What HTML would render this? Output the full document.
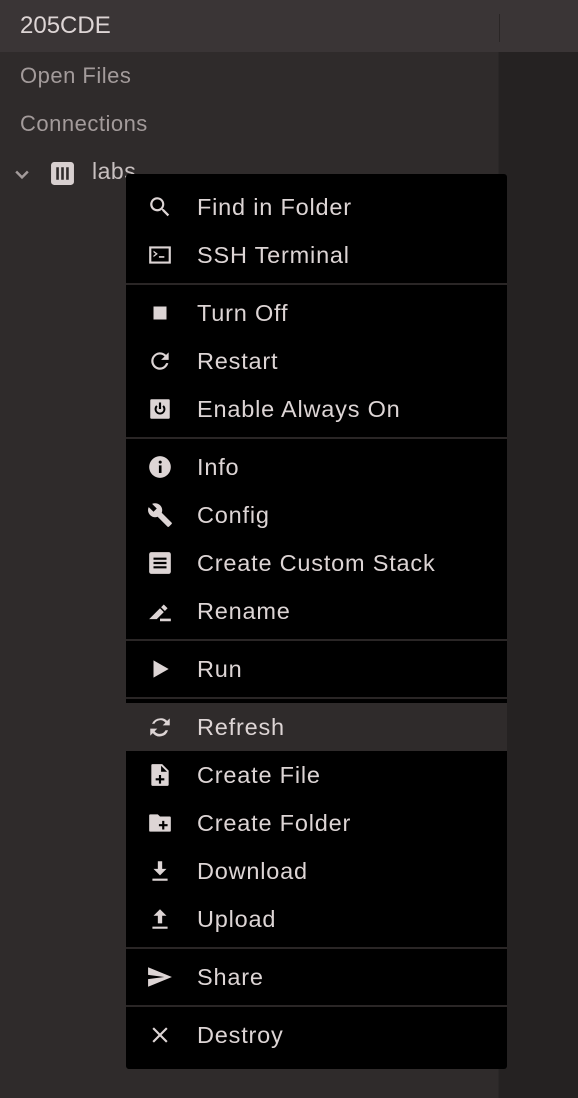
<!DOCTYPE html>
<html><head><meta charset="utf-8"><style>
*{margin:0;padding:0;box-sizing:border-box}
body{width:578px;height:1098px;overflow:hidden;background:#252222;font-family:"Liberation Sans",sans-serif;position:relative}
.top{position:absolute;left:0;top:0;width:578px;height:52px;background:#3a3536}
.top .t{position:absolute;left:20px;top:12px;font-size:24px;color:#ddd5d5;letter-spacing:0px}
.top .d{position:absolute;left:499px;top:14px;width:1px;height:28px;background:#2a2626}
.side{position:absolute;left:0;top:52px;width:499px;height:1046px;background:#2f2b2b;border-right:1px solid #2a2727}
.s{position:absolute;left:20px;font-size:22px;color:#a39b9b;letter-spacing:0.5px}
.menu{position:absolute;left:126px;top:174px;width:381px;height:895px;background:#000;border-radius:3px;padding-top:9px}
.it{height:48px;display:flex;align-items:center;color:#ddd5d5;font-size:23.5px;position:relative;letter-spacing:0.8px}
.it span{position:absolute;left:71px}
.it svg{position:absolute;left:21px;top:11px;width:26px;height:26px;fill:#ddd5d5}
.sep{height:10px;position:relative}
.sep:after{content:"";position:absolute;left:0;right:0;top:4px;height:2px;background:#2a2626}
.hl{background:#2f2b2b}
</style></head><body>
<div class="top"><div class="t">205CDE</div><div class="d"></div></div>
<div class="side">
<div class="s" style="top:11px">Open Files</div>
<div class="s" style="top:59px">Connections</div>
<svg style="position:absolute;left:12px;top:112px" width="20" height="20" viewBox="0 0 24 24"><path d="M5 9l7 7 7-7" stroke="#a39b9b" stroke-width="3" fill="none"/></svg>
<svg style="position:absolute;left:50px;top:109px" width="25" height="25" viewBox="0 0 24 24"><rect x="1" y="1" width="22" height="22" rx="3" fill="#d8d0d0"/><rect x="6" y="6" width="2.5" height="12" fill="#2f2b2b"/><rect x="10.75" y="6" width="2.5" height="12" fill="#2f2b2b"/><rect x="15.5" y="6" width="2.5" height="12" fill="#2f2b2b"/></svg>
<div class="s" style="left:92px;top:106px;color:#c8c0c0;font-size:23px">labs</div>
</div>
<div class="menu">
<div class="it"><svg viewBox="0 0 24 24"><path d="M15.5 14h-.8l-.3-.3A6.5 6.5 0 1 0 9.5 16c1.6 0 3.1-.6 4.2-1.6l.3.3v.8l5 5 1.5-1.5-5-5zm-6 0C7 14 5 12 5 9.5S7 5 9.5 5 14 7 14 9.5 12 14 9.5 14z"/></svg><span>Find in Folder</span></div>
<div class="it"><svg viewBox="0 0 24 24"><path d="M2 4h20v16H2zM4 6v12h16V6zm2 2l4 3-4 3v-1.5L8 11 6 9.5zm5 5h5v1.5h-5z"/></svg><span>SSH Terminal</span></div>
<div class="sep"></div>
<div class="it"><svg viewBox="0 0 24 24"><rect x="6" y="6" width="12" height="12"/></svg><span>Turn Off</span></div>
<div class="it"><svg viewBox="0 0 24 24"><path d="M17.6 6.4A8 8 0 1 0 19.7 14h-2.1A6 6 0 1 1 12 6c1.7 0 3.1.7 4.2 1.8L13 11h7V4z"/></svg><span>Restart</span></div>
<div class="it"><svg viewBox="0 0 24 24"><path d="M4 3h16a1 1 0 0 1 1 1v16a1 1 0 0 1-1 1H4a1 1 0 0 1-1-1V4a1 1 0 0 1 1-1z"/><path d="M11 6h2v6h-2z" fill="#000"/><path d="M8.5 8.5a5 5 0 1 0 7 0l-1.3 1.3a3.2 3.2 0 1 1-4.4 0z" fill="#000"/></svg><span>Enable Always On</span></div>
<div class="sep"></div>
<div class="it"><svg viewBox="0 0 24 24"><circle cx="12" cy="12" r="10"/><rect x="11" y="10.5" width="2.4" height="7" fill="#000"/><circle cx="12.2" cy="7.5" r="1.4" fill="#000"/></svg><span>Info</span></div>
<div class="it"><svg viewBox="0 0 24 24"><path d="M22.7 19l-9.1-9.1c.9-2.3.4-5-1.5-6.9-2-2-5-2.4-7.4-1.3L9 6 6 9 1.6 4.7C.4 7.1.9 10.1 2.9 12.1c1.9 1.9 4.6 2.4 6.9 1.5l9.1 9.1c.4.4 1 .4 1.4 0l2.3-2.3c.5-.4.5-1.1.1-1.4z"/></svg><span>Config</span></div>
<div class="it"><svg viewBox="0 0 24 24"><rect x="2" y="2" width="20" height="20" rx="2"/><path d="M6 7h12v2H6zm0 4h12v2H6zm0 4h12v2H6z" fill="#000"/></svg><span>Create Custom Stack</span></div>
<div class="it"><svg viewBox="0 0 24 24"><path d="M2 19.5l10-10 3.5 3.5-6.5 6.5zM13 8.5l2.5-2.5L19 9.5 16.5 12zM12 19h10v2.5H12z"/></svg><span>Rename</span></div>
<div class="sep"></div>
<div class="it"><svg viewBox="0 0 24 24"><path d="M6 4l14 8-14 8z"/></svg><span>Run</span></div>
<div class="sep"></div>
<div class="it hl"><svg viewBox="0 0 24 24"><path d="M12 4a8 8 0 0 0-7.4 5h2.3A6 6 0 0 1 17 8l-2.5 2.5H21V4l-2.4 2.4A8 8 0 0 0 12 4zM3 13.5V20l2.4-2.4A8 8 0 0 0 19.4 15h-2.3A6 6 0 0 1 7 16l2.5-2.5z"/></svg><span>Refresh</span></div>
<div class="it"><svg viewBox="0 0 24 24"><path d="M5 2h9l6 6v13a1 1 0 0 1-1 1H5a1 1 0 0 1-1-1V3a1 1 0 0 1 1-1zm8 1.5V9h5.5z"/><path d="M11 12h2v3h3v2h-3v3h-2v-3H8v-2h3z" fill="#000"/></svg><span>Create File</span></div>
<div class="it"><svg viewBox="0 0 24 24"><path d="M2 5a1 1 0 0 1 1-1h7l2 2h9a1 1 0 0 1 1 1v12a1 1 0 0 1-1 1H3a1 1 0 0 1-1-1z"/><path d="M14 10h2v3h3v2h-3v3h-2v-3h-3v-2h3z" fill="#000"/></svg><span>Create Folder</span></div>
<div class="it"><svg viewBox="0 0 24 24"><path d="M10 3h4v7h4l-6 6-6-6h4zM5 19h14v2H5z"/></svg><span>Download</span></div>
<div class="it"><svg viewBox="0 0 24 24"><path d="M10 16h4V9h4l-6-6-6 6h4zM5 19h14v2H5z"/></svg><span>Upload</span></div>
<div class="sep"></div>
<div class="it"><svg viewBox="0 0 24 24"><path d="M1 21l22-9L1 3v7l15 2-15 2z"/></svg><span>Share</span></div>
<div class="sep"></div>
<div class="it"><svg viewBox="0 0 24 24"><path d="M19 6.4L17.6 5 12 10.6 6.4 5 5 6.4 10.6 12 5 17.6 6.4 19 12 13.4 17.6 19 19 17.6 13.4 12z"/></svg><span>Destroy</span></div>
</div>
</body></html>
